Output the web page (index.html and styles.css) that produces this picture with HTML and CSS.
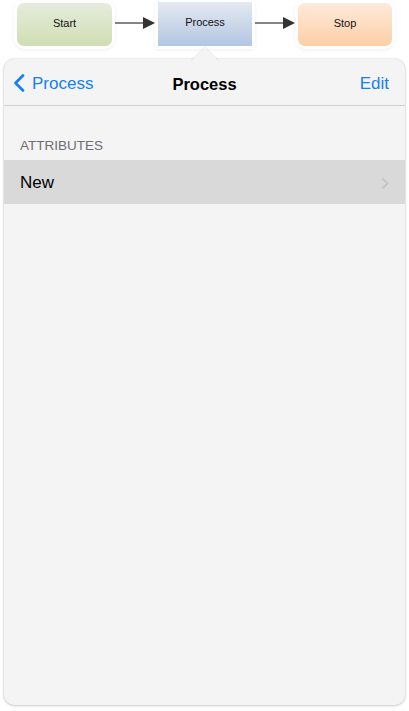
FILE: index.html
```html
<!DOCTYPE html>
<html lang="en">
<head>
  <meta charset="UTF-8">
  <meta name="viewport" content="width=device-width, initial-scale=1.0">
  <title>Process</title>
  <link rel="stylesheet" href="styles.css">
</head>
<body>
  <!-- flow diagram -->
  <div class="flow">
    <div class="node node-start">Start</div>
    <svg class="arrow" width="40" height="14" viewBox="0 0 40 14">
      <line x1="0" y1="7" x2="29" y2="7" stroke="#333" stroke-width="1.2"/>
      <polygon points="28,1 40,7 28,13" fill="#333"/>
    </svg>
    <div class="node node-process">Process</div>
    <svg class="arrow" width="40" height="14" viewBox="0 0 40 14">
      <line x1="0" y1="7" x2="29" y2="7" stroke="#333" stroke-width="1.2"/>
      <polygon points="28,1 40,7 28,13" fill="#333"/>
    </svg>
    <div class="node node-stop">Stop</div>
  </div>

  <!-- popover -->
  <div class="popover">
    <div class="pointer"></div>
    <div class="navbar">
      <div class="nav-back">
        <svg width="12" height="18" viewBox="0 0 12 18">
          <polyline points="10,1.5 2.5,9 10,16.5" fill="none" stroke="#157efb" stroke-width="2.6" stroke-linecap="round" stroke-linejoin="round"/>
        </svg>
        <span>Process</span>
      </div>
      <div class="nav-title">Process</div>
      <div class="nav-edit">Edit</div>
    </div>

    <div class="section-header">ATTRIBUTES</div>
    <div class="row">
      <span>New</span>
      <svg width="8" height="13" viewBox="0 0 8 13">
        <polyline points="1.5,1.5 6.5,6.5 1.5,11.5" fill="none" stroke="#c4c4c8" stroke-width="1.8"/>
      </svg>
    </div>
  </div>
</body>
</html>
```
FILE: styles.css
```css
html, body {
  margin: 0;
  padding: 0;
  background: #fff;
}

body {
  font-family: "Liberation Sans", Arial, sans-serif;
  width: 409px;
  height: 711px;
  overflow: hidden;
}

.flow {
  display: flex;
  align-items: center;
  padding: 3px 0 0 17px;
  height: 43px;
}

.node {
  box-sizing: border-box;
  width: 95px;
  height: 43px;
  padding-bottom: 4px;
  display: flex;
  align-items: center;
  justify-content: center;
  font-size: 11px;
  color: #111;
  border-radius: 7px;
  box-shadow: 0 0 0 3px #fff, 0 1px 4px 2px rgba(0, 0, 0, 0.1);
}

.node-start {
  background: linear-gradient(#e6ecdc, #cfdeb3);
}

.node-process {
  width: 94px;
  height: 44px;
  margin-top: -1px;
  padding-bottom: 5px;
  border-radius: 0;
  background: linear-gradient(#e5e9f1, #b2c6e3);
}

.node-stop {
  width: 94px;
  background: linear-gradient(#feeadb, #fdcfa6);
}

.arrow {
  margin: 0 3px 3px;
}

.popover {
  position: relative;
  margin: 13px 0 0 4px;
  width: 401px;
  height: 646px;
  background: #f4f4f4;
  border-radius: 10px;
  box-shadow: 0 0 2px rgba(0, 0, 0, 0.2), 0 1px 3px rgba(0, 0, 0, 0.15);
}

.pointer {
  position: absolute;
  left: 191px;
  top: -7px;
  width: 20px;
  height: 20px;
  background: #f4f4f4;
  transform: rotate(45deg);
  box-shadow: -1px -1px 2px rgba(0, 0, 0, 0.07);
}

.navbar {
  position: relative;
  box-sizing: border-box;
  height: 47px;
  display: flex;
  align-items: center;
  justify-content: space-between;
  padding: 4px 16px 0 9px;
  border-bottom: 1px solid #cfcfd2;
  font-size: 17px;
}

.nav-back {
  display: flex;
  align-items: center;
  color: #157efb;
}

.nav-back svg {
  margin-right: 7px;
  margin-top: -2px;
}

.nav-title {
  position: absolute;
  left: 0;
  right: 0;
  text-align: center;
  font-weight: bold;
  font-size: 16.5px;
  color: #000;
  pointer-events: none;
}

.nav-edit {
  color: #157efb;
}

.section-header {
  padding: 32px 16px 7px;
  font-size: 13.5px;
  color: #6d6d72;
}

.row {
  height: 44px;
  display: flex;
  align-items: center;
  justify-content: space-between;
  padding: 2px 16px 0 16px;
  box-sizing: border-box;
  background: #d9d9d9;
  font-size: 17px;
  color: #000;
}
```
